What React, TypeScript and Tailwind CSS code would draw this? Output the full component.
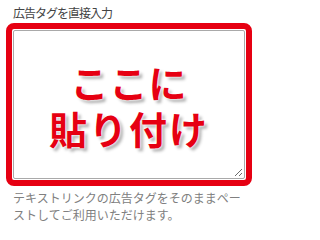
export default function App() {
  return (
    <div className="w-[259px] h-[238px] bg-white font-['Noto_Sans_CJK_JP',sans-serif]">
      {/* Label */}
      <div className="pl-[13px] pt-[5px] h-[23px] text-[12px] leading-[16px] tracking-[-1px] text-[#444]">
        広告タグを直接入力
      </div>

      {/* Red highlight frame around the tag input */}
      <div className="mx-[6px] w-[246px] h-[163px] rounded-[8px] border-[6px] border-[#e60012] p-[1px]">
        <div className="relative flex h-full w-full flex-col items-center justify-center rounded-[2px] border border-[#a9a9a9] bg-white">
          <div className="text-[38px] leading-[46px] font-bold text-[#e60012] text-center [text-shadow:0_0_2px_#fff,0_0_3px_#fff,3px_3px_3px_rgba(0,0,0,0.3)]">
            <p className="tracking-[1px]">ここに</p>
            <p className="tracking-[2px]">貼り付け</p>
          </div>
          {/* resize grip */}
          <svg className="absolute right-[1px] bottom-[1px]" width="9" height="9" viewBox="0 0 9 9">
            <path d="M8 1L1 8M8 5L5 8" stroke="#6b6b6b" strokeWidth="1" fill="none" />
          </svg>
        </div>
      </div>

      {/* Help text */}
      <p className="pl-[13px] pt-[3px] w-[247px] text-[12px] leading-[17px] text-[#808080]">
        テキストリンクの広告タグをそのままペーストしてご利用いただけます。
      </p>
    </div>
  )
}
